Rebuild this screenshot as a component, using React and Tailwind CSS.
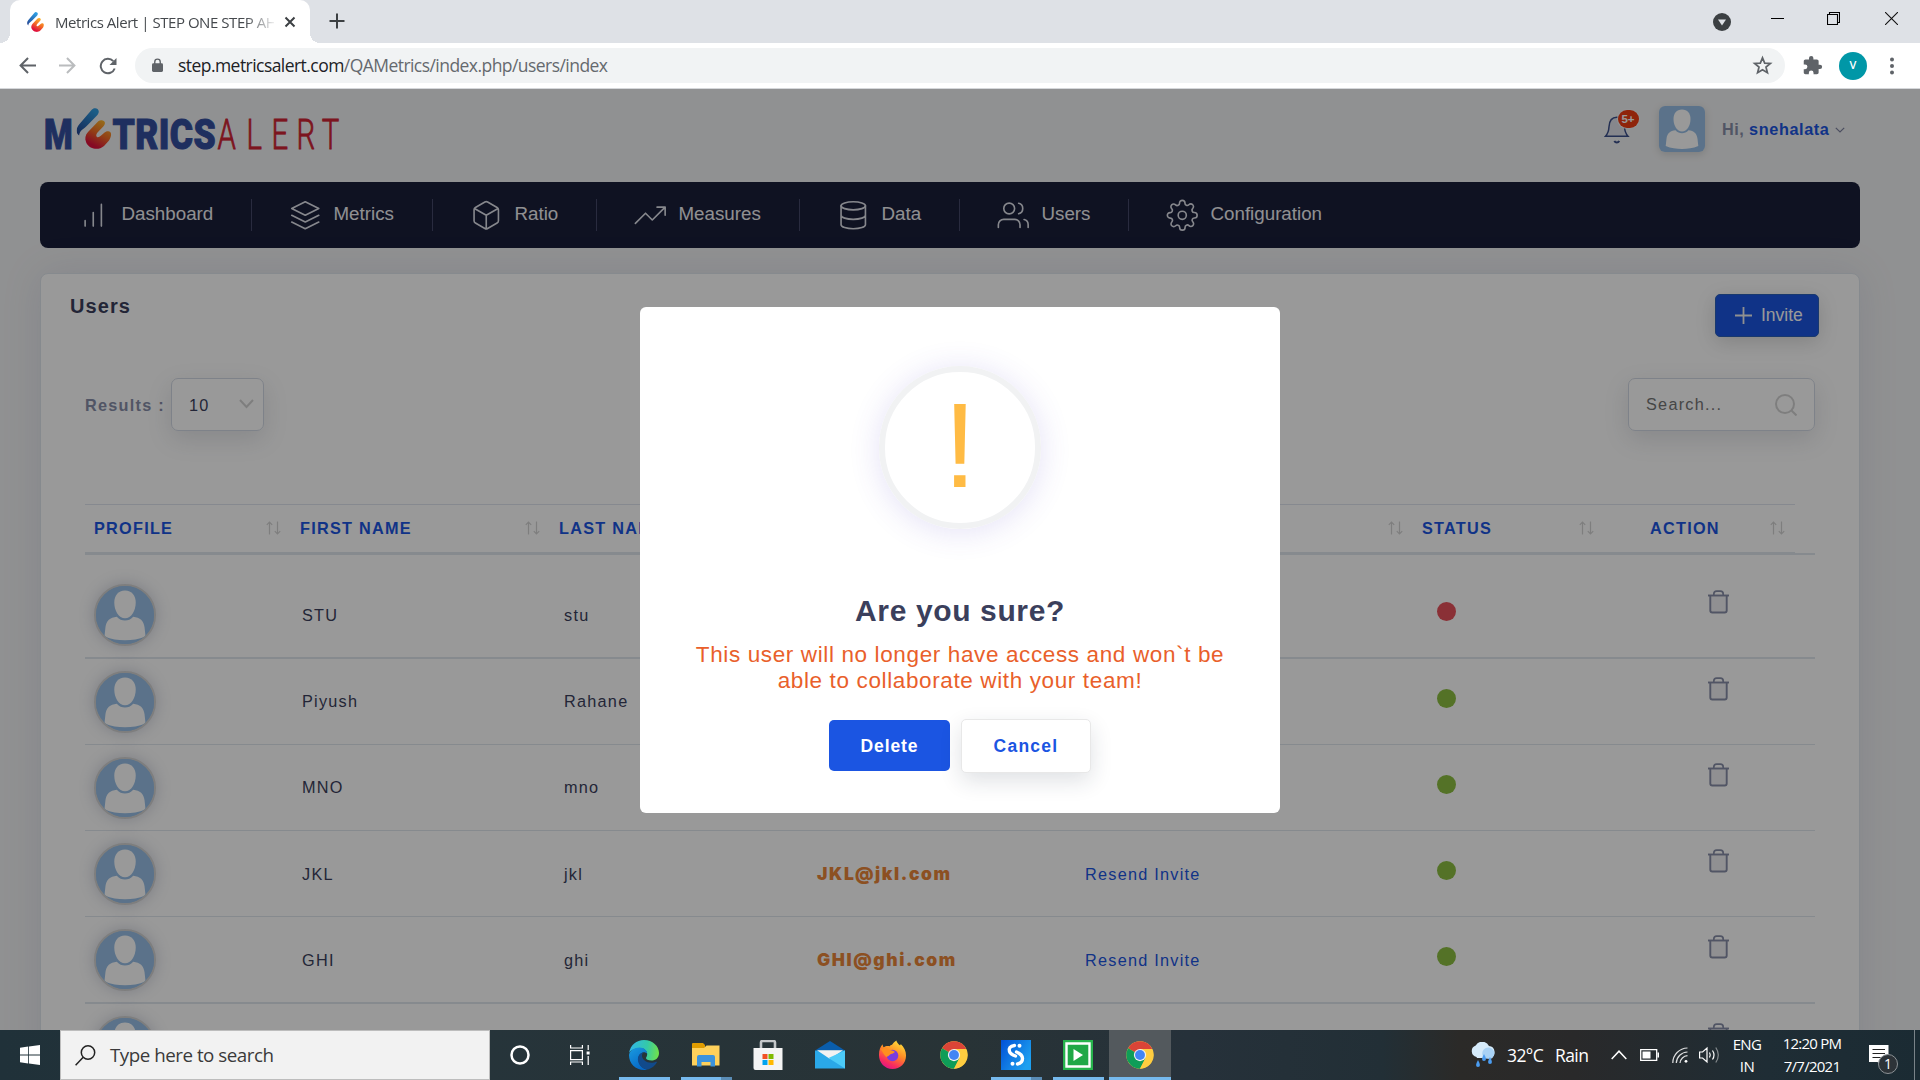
import React from "react";

function Feather({ children, size = 33.75, sw = 1.3, className = "" }) {
  return (
    <svg width={size} height={size} viewBox="0 0 24 24" fill="none" stroke="currentColor" strokeWidth={sw} strokeLinecap="round" strokeLinejoin="round" className={"shrink-0 " + className}>
      {children}
    </svg>
  );
}

function Flame({ id, ...rest }) {
  return (
    <svg viewBox="0 0 35 41" {...rest}>
      <defs>
        <linearGradient id={id + "b"} x1="0" y1="1" x2="0.6" y2="0">
          <stop offset="0" stopColor="#23408e" />
          <stop offset="1" stopColor="#2f9be0" />
        </linearGradient>
        <linearGradient id={id + "r"} x1="0.3" y1="1" x2="0.8" y2="0">
          <stop offset="0.1" stopColor="#e0113c" />
          <stop offset="0.5" stopColor="#f36a25" />
          <stop offset="1" stopColor="#fbc02d" />
        </linearGradient>
      </defs>
      <path d="M15 2C16.200.5 17.500.1 19 .3C21.500.6 23 3 22 5C21.500 6.300 20.500 7.600 19.500 8.600L10.200 18C7.500 20.500 5.500 21.500 4.200 23.300C3.200 24.700 2.900 26 2.600 27.500C1 26.500 .2 25 .2 22.800C.2 20.300 1.200 18.200 2.800 16.300Z" fill={`url(#${id}b)`} />
      <path d="M21.800 13.300C23 12.200 24.200 12 25.400 12.200C27.500 12.500 29 14.300 28.300 16C27.800 17.400 26.800 18.500 25.800 19.600L21 24.600C19.300 26.500 19.500 28.500 20.500 29.100C21.800 29.600 23 29 24.300 27.800L27.500 24.900C29 23.600 30.500 22.900 32 23.200C34.300 23.700 34.900 25.500 34.500 27.500C34 29.800 33.500 31 32.300 32.700L27.500 38C24.500 40.500 21.500 41 18.500 40.700C14.500 40.200 11 37.800 9.700 34.500C8 30.500 8.800 27 11.500 24Z" fill={`url(#${id}r)`} />
    </svg>
  );
}

function BrowserChrome() {
  return (
    <div className="shrink-0 h-[89px] bg-white border-b border-[#d5d7da] font-['Open_Sans',sans-serif]">
      <div className="h-[43px] bg-[#dee1e6] flex items-start">
        <div className="w-[10px] h-full flex items-end"><div className="w-[10px] h-[10px] bg-[radial-gradient(circle_at_0_0,#dee1e6_10px,#fff_10px)]" /></div>
        <div className="w-[300px] h-full bg-white rounded-t-[10px] flex items-center pl-[17px]">
          <Flame id="fav" className="w-[17px] h-[20px]" preserveAspectRatio="none" />
          <div className="ml-[11px] w-[219px] h-[24px] leading-[24px] text-[15px] tracking-[-0.450px] text-[#45494d] whitespace-nowrap overflow-hidden [mask-image:linear-gradient(to_right,#000_190px,transparent_222px)]">Metrics Alert | STEP ONE STEP AHEAD</div>
          <svg width="12" height="12" viewBox="0 0 12 12" className="ml-[10px]" stroke="#3c4043" strokeWidth="2"><path d="M1.500 1.500l9 9M10.500 1.500l-9 9" /></svg>
        </div>
        <div className="w-[10px] h-full flex items-end"><div className="w-[10px] h-[10px] bg-[radial-gradient(circle_at_100%_0,#dee1e6_10px,#fff_10px)]" /></div>
        <svg width="16" height="16" viewBox="0 0 16 16" className="ml-[9px] mt-[13px]" stroke="#3c4043" strokeWidth="2"><path d="M8 .5v15M.5 8h15" /></svg>
        <div className="flex-1" />
        <svg width="18" height="18" viewBox="0 0 18 18" className="mt-[13px]"><circle cx="9" cy="9" r="9" fill="#3c4043" /><path d="M5 6.500h8L9 12.500z" fill="#dee1e6" /></svg>
        <svg width="13" height="13" viewBox="0 0 13 13" className="ml-[40px] mt-[12px]"><path d="M0 6.500h13" stroke="#000" /></svg>
        <svg width="13" height="13" viewBox="0 0 13 13" className="ml-[43px] mt-[12px]" fill="none" stroke="#000" strokeWidth="1.100"><path d="M.5 2.500h10v10H.5zM2.500 2.500V.5h10v10h-2" /></svg>
        <svg width="13" height="13" viewBox="0 0 13 13" className="ml-[45px] mr-[22px] mt-[12px]" stroke="#111" strokeWidth="1.100"><path d="M0 0l13 13M13 0L0 13" /></svg>
      </div>
      <div className="h-[45px] flex items-center">
        <svg width="17" height="17" viewBox="0 0 16 16" className="ml-[19px]" fill="none" stroke="#5f6368" strokeWidth="1.900"><path d="M16 8H1.800M8.500 1L1.500 8l7 7" /></svg>
        <svg width="17" height="17" viewBox="0 0 16 16" className="ml-[23px]" fill="none" stroke="#babcbe" strokeWidth="1.900"><path d="M0 8h14.200M7.500 1l7 7-7 7" /></svg>
        <svg width="18" height="18" viewBox="0 0 18 18" className="ml-[23px]" fill="none" stroke="#5f6368" strokeWidth="2"><path d="M15.700 11.500A7.200 7.200 0 1 1 14.300 4.200" /><path d="M17.500 1v7h-7z" fill="#5f6368" stroke="none" /></svg>
        <div className="ml-[18px] w-[1650px] h-[35px] rounded-full bg-[#f1f3f4] flex items-center">
          <svg width="11" height="15" viewBox="0 0 12 15" className="ml-[17px]" fill="#5f6368"><rect x="0" y="5" width="12" height="9.500" rx="1.500" /><path d="M3 6V3.600a3 3 0 0 1 6 0V6" fill="none" stroke="#5f6368" strokeWidth="1.500" /></svg>
          <div className="ml-[15px] text-[17.500px] leading-[28px] pb-[1px] tracking-[-0.550px] text-[#65696e] whitespace-nowrap"><span className="text-[#202124]">step.metricsalert.com</span>/QAMetrics/index.php/users/index</div>
          <div className="flex-1" />
          <svg width="21" height="21" viewBox="0 0 24 24" className="mr-[12px]" fill="none" stroke="#5f6368" strokeWidth="2"><path d="M12 3.200l2.500 6 6.500.5-5 4.200 1.600 6.300L12 16.800 6.400 20.200 8 13.900 3 9.700l6.500-.5z" /></svg>
        </div>
        <svg width="21" height="21" viewBox="0 0 24 24" className="ml-[17px]" fill="#5f6368"><path d="M20.500 11H19V7c0-1.100-.9-2-2-2h-4V3.500a2.500 2.500 0 0 0-5 0V5H4c-1.100 0-2 .9-2 2v3.800h1.500a2.700 2.700 0 0 1 0 5.400H2V20c0 1.100.9 2 2 2h3.800v-1.500a2.700 2.700 0 0 1 5.400 0V22H17c1.100 0 2-.9 2-2v-4h1.500a2.500 2.500 0 0 0 0-5z" /></svg>
        <div className="ml-[16px] w-[28px] h-[28px] rounded-full bg-[#0097a7] text-white text-[11px] font-semibold flex items-center justify-center">V</div>
        <svg width="4" height="18" viewBox="0 0 4 18" className="ml-[23px]" fill="#5f6368"><circle cx="2" cy="2.500" r="2" /><circle cx="2" cy="9" r="2" /><circle cx="2" cy="15.500" r="2" /></svg>
      </div>
    </div>
  );
}

function Logo() {
  return (
    <svg width="300" height="46" viewBox="0 0 300 46" className="mt-[17px]">
      <g fontFamily="Roboto, sans-serif" fontSize="42">
        <text x="0" y="43" fontWeight="900" fill="#344f9f" stroke="#344f9f" strokeWidth="1" textLength="29" lengthAdjust="spacingAndGlyphs">M</text>
        <text x="68.500" y="43" fontWeight="900" fill="#344f9f" stroke="#344f9f" strokeWidth="1" textLength="103.500" lengthAdjust="spacingAndGlyphs">TRICS</text>
        <g transform="translate(173.500 43) scale(.7 1)">
          <text x="0 41.500 77 113 149" y="0" fontWeight="300" fill="#cf2434" stroke="#cf2434" strokeWidth=".8">ALERT</text>
        </g>
      </g>
      <g transform="translate(32.500 2)"><Flame id="lg" width="35" height="41" preserveAspectRatio="none" /></g>
    </svg>
  );
}

function Person({ className }) {
  return (
    <svg viewBox="0 0 46 46" className={className}>
      <rect width="46" height="46" fill="#98bfe6" />
      <path d="M23 3.500c5.500 0 8.500 4 8.500 9.500C31.500 19.500 28 25.500 23 25.500S14.500 19.500 14.500 13C14.500 7.500 17.500 3.500 23 3.500z" fill="#fff" />
      <path d="M16.500 24.300c2 2.300 4 3 6.500 3s4.500-.7 6.500-3c5.500.7 8.300 3 9 8.500l.8 7.200C34 42.300 28.500 43 23 43s-11-.7-16.300-3l.8-7.200c.7-5.500 3.500-7.800 9-8.500z" fill="#fff" />
    </svg>
  );
}

function Header() {
  return (
    <div className="h-[93px] flex items-start pl-[44px] pr-[75px] text-[16.250px] tracking-[0.450px] font-bold">
      <Logo />
      <div className="flex-1" />
      <div className="relative w-[26px] mt-[27px] mr-[29px]">
        <svg width="26" height="29" viewBox="0 0 26 29" fill="none" stroke="#3b4f8a" strokeWidth="1.500" className="block">
          <path d="M1.500 20.200h22.500c-2.800-3-3.300-6-3.500-9.500-.3-5.500-2.800-9.500-7.700-9.500s-7.500 4-7.800 9.500c-.2 3.500-.7 6.500-3.500 9.500z" fill="rgba(120,135,180,.15)" />
          <path d="M10.300 25c1.300 2 3.700 2 5 0" strokeWidth="2" />
        </svg>
        <div className="absolute left-[13px] top-[-7px] w-[23px] h-[20px] rounded-full bg-[#f5f6fa] p-[1px]">
          <div className="w-full h-full rounded-full bg-[#ef3d13] text-white text-[11.500px] tracking-[0] leading-[18px] text-center pr-[1px]">5+</div>
        </div>
      </div>
      <Person className="w-[46px] h-[46px] mt-[17px] rounded-[6px] shadow-[0_2px_8px_rgba(0,0,0,.15)]" />
      <div className="ml-[17px] w-[108px] whitespace-nowrap mt-[29px] leading-[22px] text-[#888ea8]">Hi, <span className="text-[#1b55e2] tracking-[0.600px]">snehalata</span></div>
      <svg width="10" height="6" viewBox="0 0 10 6" className="mt-[38px] ml-[5px]" fill="none" stroke="#7d82a0" strokeWidth="1.200"><path d="M.8.8L5 5 9.200.8" /></svg>
    </div>
  );
}

const nav = [
  ["Dashboard", "w-[212px]", <path d="M12 20V10M18 20V4M6 20V16" />],
  ["Metrics", "w-[181px]", <path d="M12 2L2 7l10 5 10-5-10-5zM2 17l10 5 10-5M2 12l10 5 10-5" />],
  ["Ratio", "w-[164px]", <path d="M21 16V8a2 2 0 0 0-1-1.730l-7-4a2 2 0 0 0-2 0l-7 4A2 2 0 0 0 3 8v8a2 2 0 0 0 1 1.730l7 4a2 2 0 0 0 2 0l7-4A2 2 0 0 0 21 16zM3.270 6.960L12 12.010l8.730-5.050M12 22.080V12" />],
  ["Measures", "w-[203px]", <path d="M23 6l-9.500 9.500-5-5L1 18M17 6h6v6" />],
  ["Data", "w-[160px]", <><ellipse cx="12" cy="5" rx="9" ry="3" /><path d="M21 12c0 1.660-4 3-9 3s-9-1.340-9-3M3 5v14c0 1.660 4 3 9 3s9-1.340 9-3V5" /></>],
  ["Users", "w-[169px]", <><path d="M17 21v-2a4 4 0 0 0-4-4H5a4 4 0 0 0-4 4v2M23 21v-2a4 4 0 0 0-3-3.870M16 3.130a4 4 0 0 1 0 7.750" /><circle cx="9" cy="7" r="4" /></>],
  ["Configuration", "w-[240px]", <><circle cx="12" cy="12" r="3" /><path d="M19.400 15a1.650 1.650 0 0 0 .33 1.820l.06.06a2 2 0 0 1 0 2.830 2 2 0 0 1-2.830 0l-.06-.06a1.650 1.650 0 0 0-1.820-.33 1.650 1.650 0 0 0-1 1.510V21a2 2 0 0 1-2 2 2 2 0 0 1-2-2v-.09A1.650 1.650 0 0 0 9 19.400a1.650 1.650 0 0 0-1.820.33l-.06.06a2 2 0 0 1-2.830 0 2 2 0 0 1 0-2.830l.06-.06a1.650 1.650 0 0 0 .33-1.820 1.650 1.650 0 0 0-1.510-1H3a2 2 0 0 1-2-2 2 2 0 0 1 2-2h.09A1.650 1.650 0 0 0 4.600 9a1.650 1.650 0 0 0-.33-1.820l-.06-.06a2 2 0 0 1 0-2.830 2 2 0 0 1 2.830 0l.06.06a1.650 1.650 0 0 0 1.820.33H9a1.650 1.650 0 0 0 1-1.510V3a2 2 0 0 1 2-2 2 2 0 0 1 2 2v.09a1.650 1.650 0 0 0 1 1.510 1.650 1.650 0 0 0 1.820-.33l.06-.06a2 2 0 0 1 2.830 0 2 2 0 0 1 0 2.830l-.06.06a1.650 1.650 0 0 0-.33 1.820V9a1.650 1.650 0 0 0 1.510 1H21a2 2 0 0 1 2 2 2 2 0 0 1-2 2h-.09a1.650 1.650 0 0 0-1.510 1z" /></>],
];

function NavBar() {
  return (
    <div className="ml-[40px] w-[1820px] h-[66px] bg-[#191e3a] rounded-[8px] flex items-center text-[#f0f0f3] text-[18.750px]">
      {nav.map(([label, w, icon], i) => (
        <div key={label} className={`${w} h-[32px] flex items-center pl-[37px] ${i < 6 ? "border-r border-[#45496a]" : ""}`}>
          <Feather size={32.5} sw={1.2} className="text-[#e0e2ea]">{icon}</Feather>
          <span className="ml-[12px] leading-[24px] relative top-[-1px]">{label}</span>
        </div>
      ))}
    </div>
  );
}

function Sort() {
  return (
    <svg width="15" height="14" viewBox="0 0 15 14" fill="none" stroke="#d3d3d3" strokeWidth="1.200" className="mr-[10px] mt-[-1px]">
      <path d="M3.500 13.500V1M.8 3.800L3.500 1l2.700 2.800M11.500.5V13M8.800 10.200l2.700 2.800 2.700-2.800" />
    </svg>
  );
}

const heads = [
  ["PROFILE", "w-[206px] pl-[9px]"],
  ["FIRST NAME", "w-[259px] pl-[9px]"],
  ["LAST NAME", "w-[258px] pl-[9px]"],
  ["", "w-[264px] pl-[9px]"],
  ["", "w-[341px] pl-[9px]"],
  ["STATUS", "w-[191px] pl-[9px]"],
  ["ACTION", "w-[191px] pl-[46px]"],
];

const rows = [
  { first: "STU", last: "stu", red: true, drop: true },
  { first: "Piyush", last: "Rahane" },
  { first: "MNO", last: "mno" },
  { first: "JKL", last: "jkl", mail: "JKL@jkl.com", drop: true },
  { first: "GHI", last: "ghi", mail: "GHI@ghi.com", drop: true },
  { first: "", last: "" },
];
const rowStyles = [
  "h-[104px] pt-[17px] border-b-2",
  "h-[86px] border-b",
  "h-[86px] border-b",
  "h-[86px] border-b",
  "h-[87px] border-b-2",
  "h-[86px]",
];

function UsersTable() {
  return (
    <div className="mt-[73px] mx-[44px] text-[16.250px] tracking-[1.250px]">
      <div className="w-[1710px] h-[48px] flex items-center border-t border-[#dfe4ee] font-bold text-[#1b55e2]">
        {heads.map(([h, c], i) => (
          <div key={i} className={`${c} flex items-center justify-between whitespace-nowrap`}><span>{h}</span><Sort /></div>
        ))}
      </div>
      <div className="w-[1710px] h-px bg-[#e0e6ed]" />
      <div className="border-t-2 border-[#e0e6ed]">
        {rows.map((r, i) => {
          const drop = r.drop ? "pt-[2px]" : "";
          return (
            <div key={i} className={`${rowStyles[i]} border-[#e0e6ed] flex items-center text-[#3b3f5c]`}>
              <div className="w-[217px] pl-[9px]">
                <div className="w-[62px] h-[62px] rounded-full border-2 border-[#d2d2d2] bg-[#98bfe6] shadow-[0_0_15px_rgba(60,70,110,.25)] overflow-hidden">
                  <Person className="w-[58px] h-[58px]" />
                </div>
              </div>
              <div className={`w-[262px] ${drop}`}>{r.first}</div>
              <div className={`w-[253px] ${drop}`}>{r.last}</div>
              <div className={`w-[268px] ${drop} whitespace-nowrap font-['Inter',sans-serif] font-black text-[17.500px] tracking-[1.600px] text-[#ea8639]`}>{r.mail}</div>
              <div className={`w-[352px] ${drop} text-[#1b55e2]`}>{r.mail && "Resend Invite"}</div>
              <div className={`w-[19px] h-[19px] rounded-full mt-[-6px] mr-[252px] ${r.red ? "bg-[#e7515a]" : "bg-[#8dbf42]"}`} />
              <svg width="21" height="24" viewBox="0 0 21 24" fill="none" stroke="#888ea8" strokeWidth="1.900" className="mt-[-25px]">
                <path d="M0 5.500h21" /><path d="M5.800 5.500V4q0-2.800 2.800-2.800h3.800q2.800 0 2.800 2.800v1.500" strokeWidth="1.700" /><path d="M2.300 6v14.500q0 2 2 2h12.400q2 0 2-2V6" fill="rgba(136,142,168,.12)" />
              </svg>
            </div>
          );
        })}
      </div>
    </div>
  );
}

function UsersCard() {
  return (
    <div className="mt-[25px] ml-[40px] w-[1820px] h-[900px] bg-white rounded-[8px] border border-[#e0e6ed] shadow-[0_0_40px_rgba(94,92,154,.12)]">
      <div className="h-[103px] flex justify-between items-start pl-[29px] pr-[40px]">
        <div className="mt-[20px] text-[20px] leading-[24px] tracking-[1.100px] font-bold text-[#3b3f5c]">Users</div>
        <div className="mt-[20px] w-[104px] h-[43px] rounded-[5px] bg-[#1b55e2] border border-[#2a5fb8] text-white text-[17.500px] flex items-center pl-[19px] shadow-[0_5px_20px_rgba(0,0,0,.15)]">
          <svg width="17" height="17" viewBox="0 0 17 17" stroke="#f1f1f1" strokeWidth="1.800"><path d="M8.500 0v17M0 8.500h17" /></svg>
          <span className="ml-[9px]">Invite</span>
        </div>
      </div>
      <div className="h-[54px] flex items-center pl-[44px] pr-[44px]">
        <div className="w-[86px] pt-[2px] text-[16.250px] tracking-[1.250px] font-bold text-[#888ea8] whitespace-nowrap">Results :</div>
        <div className="w-[93px] h-[53px] rounded-[7px] border border-[#d3d9e4] shadow-[0_8px_25px_rgba(60,70,90,.15)] flex items-center justify-between pl-[17px] pr-[9px] text-[16.250px] tracking-[1.250px] text-[#3b3f5c]">
          <span className="mt-[2px]">10</span>
          <svg width="15" height="10" viewBox="0 0 15 10" fill="none" stroke="#d3d3d3" strokeWidth="2"><path d="M1 1l6.500 7L14 1" /></svg>
        </div>
        <div className="flex-1" />
        <div className="w-[187px] h-[53px] rounded-[7px] border border-[#d3d9e4] shadow-[0_8px_25px_rgba(60,70,90,.15)] flex items-center justify-between pl-[17px] pr-[17px] text-[16.250px] tracking-[1.250px] text-[#757575]">
          <span>Search...</span>
          <svg width="22" height="22" viewBox="0 0 22 22" fill="none" stroke="#d3d3d3" strokeWidth="2" className="mt-[2px]"><circle cx="10" cy="10" r="9" /><path d="M16.500 16.500l5 5" /></svg>
        </div>
      </div>
      <UsersTable />
    </div>
  );
}

function ConfirmModal() {
  return (
    <div className="absolute inset-0 bg-black/40 flex justify-center items-start pt-[218px]">
      <div className="w-[640px] h-[506px] bg-white rounded-[6px] flex flex-col items-center">
        <div className="mt-[59px] w-[162px] h-[163px] shrink-0 rounded-full border-[6px] border-[#f1f2f3] shadow-[0_3px_31px_rgba(90,70,200,.16)] flex items-center justify-center text-[#ffbb44] text-[120px] leading-[150px]"><span className="relative top-[-3px]">!</span></div>
        <div className="mt-[58px] text-[30px] leading-[48px] tracking-[0.625px] font-bold text-[#3b3f5c]">Are you sure?</div>
        <div className="mt-[7px] text-center text-[22.500px] leading-[26.250px] tracking-[0.625px] text-[#e95f2b]">This user will no longer have access and won`t be<br />able to collaborate with your team!</div>
        <div className="mt-[24px] flex items-center gap-[11px] font-bold text-[17.500px] tracking-[1.250px]">
          <div className="w-[121px] h-[51px] rounded-[5px] bg-[#1b55e2] text-white tracking-[0.900px] flex items-center justify-center pt-[1px]">Delete</div>
          <div className="w-[130px] h-[54px] rounded-[5px] bg-white border border-[#e8e8e8] text-[#1b55e2] flex items-center justify-center pt-[1px] shadow-[0_8px_22px_rgba(31,45,61,.14)]">Cancel</div>
        </div>
      </div>
    </div>
  );
}

function ChromeIcon() {
  return (
    <svg width="28" height="28" viewBox="0 0 48 48">
      <circle cx="24" cy="24" r="23.500" fill="#ffcd40" />
      <path d="M24 24L3.600 12.300A23.500 23.500 0 0 1 44.400 12.300L44.400 13.500H24z" fill="#db4437" />
      <path d="M3.600 12.300A23.500 23.500 0 0 0 24 47.500L34 30 24 24z" fill="#0f9d58" />
      <path d="M24 13.500h20.400A23.500 23.500 0 0 1 24 47.500l9.100-18.200z" fill="#ffcd40" />
      <circle cx="24" cy="24" r="10.500" fill="#f1f1f1" /><circle cx="24" cy="24" r="8.500" fill="#4285f4" />
    </svg>
  );
}

const EdgeIcon = () => (
  <svg width="30" height="30" viewBox="0 0 30 30">
    <defs>
      <linearGradient id="eg" x1="0" y1=".3" x2="1" y2=".4"><stop offset="0" stopColor="#31b5ea" /><stop offset=".6" stopColor="#34c9a8" /><stop offset="1" stopColor="#6fe04c" /></linearGradient>
      <linearGradient id="eb" x1="0" y1="0" x2=".6" y2="1"><stop offset="0" stopColor="#1a9be0" /><stop offset="1" stopColor="#0667c5" /></linearGradient>
    </defs>
    <path d="M0 13C1.500 5 7.500 0 15 0c8.500 0 15 6 15 13 0 5-3.500 7.500-7.500 7.500-3.500 0-5.500-1.200-5.500-2.500 0-.8 1.200-1.500 1.200-4C18 11 15.500 8 11 8 6 8 1.500 10.500 0 13z" fill="url(#eg)" />
    <path d="M0 15C.5 10.500 5.500 7.500 10.500 7.500c4.500 0 7.700 3 7.700 6.200-1-1.200-2.500-1.700-3.700-1.500C10.500 13 9 17 9.500 20.500c.6 4.500 4 8.500 9 9-1.200.4-2.300.5-3.500.5C6.500 30 0 23.500 0 15z" fill="url(#eb)" />
    <path d="M14.500 12.200C10 13 8.500 17 9 20.500c.6 4.500 4.500 9 10 9 4-1.200 7-3.700 8.800-7 .3-.6-.2-1-.8-.7-1.500.8-3 1-4.500 1-5.500 0-9.500-3.500-9.500-7 0-1.500.6-2.800 1.500-3.600z" fill="#114a8b" />
  </svg>
);
const FolderIcon = () => (
  <svg width="28" height="24" viewBox="0 0 28 24"><path d="M0 1q0-1 1-1h10l2 2v5H0z" fill="#e09c00" /><path d="M0 5h12l2.500-2.500H27.500V22.500H0z" fill="#ffd15b" /><path d="M5 23V14q0-2 2-2h14q2 0 2 2v9.500h-4.500V19h-9v4.500H5z" fill="#3c93dc" /></svg>
);
const StoreIcon = () => (
  <svg width="30" height="30" viewBox="0 0 30 30"><path d="M8 9V2.500Q8 1 9.500 1h11Q22 1 22 2.500V9" fill="none" stroke="#c4c7c9" strokeWidth="2.600" /><path d="M.5 8h29v22H2.500q-2 0-2-2z" fill="#f4f4f4" /><path d="M9.500 14h5v5h-5z" fill="#f25022" /><path d="M15.500 14h5v5h-5z" fill="#7fba00" /><path d="M9.500 20h5v5h-5z" fill="#00a4ef" /><path d="M15.500 20h5v5h-5z" fill="#ffb900" /></svg>
);
const MailIcon = () => (
  <svg width="30" height="28" viewBox="0 0 30 28"><path d="M0 9.500L15 0l15 9.500z" fill="#0a5dab" /><path d="M0 9.500h30v18H0z" fill="#2aa8e8" /><path d="M2 9.300h26L15 18z" fill="#f2f2f2" /><path d="M30 9.500L13.500 17 30 27.500z" fill="#4ccbf8" /></svg>
);
const FirefoxIcon = () => (
  <svg width="29" height="30" viewBox="0 0 30 30">
    <defs><linearGradient id="ff" x1=".8" y1="0" x2=".3" y2="1"><stop offset="0" stopColor="#ffe53c" /><stop offset=".45" stopColor="#ff8a25" /><stop offset=".8" stopColor="#f92d5e" /><stop offset="1" stopColor="#e01488" /></linearGradient></defs>
    <path d="M1 15C1 10 2.500 6 5 4c-.2 1.500.2 2.500 1 3 1.500-1.200 4-1.500 6-1 .5-.8 1.500-1.300 2.500-1.500C15.500 3 17 1 19 0c.3 2 2 3.500 3.500 5 .8-.3 1-1 1-1.500C27 6.500 29 11 29 15.500 29 23.500 23 29.500 15 29.500S1 23 1 15z" fill="url(#ff)" />
    <circle cx="15" cy="15.500" r="6" fill="#7a3be0" />
    <path d="M3 9c3-1.500 6-1 8 .2 2 1 5 .8 6.500 2.800-1.500 2-4 1.500-5.500 3-1 1-2.500 2-3.500 2C6 15 5 12 3 9z" fill="#ff8f1f" />
  </svg>
);
const SIcon = () => (
  <svg width="30" height="30" viewBox="0 0 30 30"><defs><linearGradient id="sb" x1="0" y1="0" x2="1" y2=".6"><stop offset="0" stopColor="#0250d6" /><stop offset="1" stopColor="#1da0f0" /></linearGradient></defs><path d="M0 0h30v30H0z" fill="url(#sb)" /><g fill="none" stroke="#fff" strokeWidth="3.400" strokeLinecap="round"><path d="M13.500 5.500C9 6 7.500 8.500 8.500 11.500c.7 2 3 3.500 6 4.500" /><path d="M15.500 12c4 1.500 6 3.500 6 6.500s-2 5-5 5.500" /></g><circle cx="18.500" cy="5.800" r="2" fill="#fff" /><circle cx="11.500" cy="23.800" r="2" fill="#fff" /></svg>
);
const PlayIcon = () => (
  <svg width="30" height="30" viewBox="0 0 30 30"><path d="M0 0h30v30H0z" fill="#27b34c" /><path d="M3.500 3.500h23v23h-23z" fill="#20a847" stroke="#fff" strokeWidth="2.400" /><path d="M10.500 9l9.500 6-9.500 6z" fill="#fff" /></svg>
);

const apps = [
  [<EdgeIcon />, "on"], [<FolderIcon />, "multi"], [<StoreIcon />, ""], [<MailIcon />, ""], [<FirefoxIcon />, ""],
  [<ChromeIcon />, ""], [<SIcon />, "multi"], [<PlayIcon />, "on"], [<ChromeIcon />, "active"],
];

function Taskbar() {
  return (
    <div className="shrink-0 h-[50px] bg-[linear-gradient(to_right,#203139,#26343a_25%,#283336_50%,#26313a_62%,#222f36_72%,#2b2a28_76%,#29292a_82%,#1f2d35_92%,#1b2b33)] flex text-white font-['Open_Sans',sans-serif]">
      <div className="w-[60px] flex items-center justify-center">
        <svg width="20" height="20" viewBox="0 0 20 20" fill="#fff"><path d="M0 2.800l8.200-1.200v8H0zM9 1.500L20 0v9.600H9zM0 10.400h8.200v8L0 17.200zM9 10.400h11V20L9 18.500z" /></svg>
      </div>
      <div className="w-[430px] h-[50px] bg-[#f2f2f2] border border-[#bdbdbd] flex items-center pl-[14px]">
        <svg width="21" height="21" viewBox="0 0 21 21" fill="none" stroke="#222" strokeWidth="1.500"><circle cx="13" cy="7.500" r="6.700" /><path d="M8.200 12.300L.6 20.300" /></svg>
        <span className="ml-[14px] text-[18.750px] tracking-[-0.480px] text-[#3a3a3a]">Type here to search</span>
      </div>
      <div className="w-[60px] flex items-center justify-center">
        <svg width="20" height="20" viewBox="0 0 20 20"><circle cx="10" cy="10" r="8.500" fill="none" stroke="#fff" strokeWidth="2.500" /></svg>
      </div>
      <div className="w-[63px] flex items-center pl-[20px]">
        <svg width="20" height="20" viewBox="0 0 20 20" fill="none" stroke="#fff" strokeWidth="1.200"><path d="M.6 5.600h11.800v9H.6zM.6 0v3h11.800V0M.6 20v-3h11.800v3M18.200 0v5M18.200 11v9" /><path d="M16.600 6.500h3v3h-3z" fill="#fff" stroke="none" /></svg>
      </div>
      {apps.map(([icon, state], i) => (
        <div key={i} className={`w-[62px] h-full flex flex-col items-center ${state === "active" ? "bg-[#53595d]" : ""}`}>
          <div className="h-[47px] pt-[3px] flex items-center justify-center">{icon}</div>
          {state === "on" && <div className="w-[51px] h-[3px] bg-[#76b9ed]" />}
          {state === "multi" && <div className="w-[51px] h-[3px] flex"><div className="w-[40px] bg-[#76b9ed]" /><div className="w-[11px] bg-[#5a8cb5]" /></div>}
          {state === "active" && <div className="w-[62px] h-[3px] bg-[#76b9ed]" />}
        </div>
      ))}
      <div className="flex-1" />
      <div className="flex items-center">
        <svg width="27" height="26" viewBox="0 0 27 26"><path d="M6.500 15a6 6 0 0 1-.8-11.500A7.500 7.500 0 0 1 19 4a6.200 6.200 0 0 1 1.500 12H7z" fill="#d6ebfa" /><path d="M15 16.500a6 6 0 1 1 5.500.5z" fill="#a9d2f5" /><path d="M8 18q-4 7 0 7t0-7zM14 12q-4 7 0 7t0-7zM20 15q-4 7 0 7t0-7z" fill="#4b9cf0" /></svg>
        <span className="ml-[10px] w-[37px] whitespace-nowrap text-[17.500px] tracking-[-0.600px]">32°C</span>
        <span className="ml-[11px] w-[34px] whitespace-nowrap text-[17.500px] tracking-[-0.600px]">Rain</span>
        <svg width="16" height="10" viewBox="0 0 16 10" className="ml-[22px]" fill="none" stroke="#fff" strokeWidth="1.500"><path d="M.7 9L8 1.200 15.300 9" /></svg>
        <svg width="19" height="12" viewBox="0 0 19 12" className="ml-[13px]"><path d="M.7.7h16v10.600h-16z" fill="none" stroke="#fff" strokeWidth="1.300" /><path d="M2.500 2.500h8v7h-8zM17.500 3.500H19v5h-1.500z" fill="#fff" /></svg>
        <svg width="16" height="16" viewBox="0 0 16 16" className="ml-[13px]" fill="none" stroke="#fff" strokeWidth="1.200"><path d="M.8 16A15 15 0 0 1 15.500 1M4.300 16A11.500 11.500 0 0 1 15.500 5M8 16A8 8 0 0 1 15.500 8.700" opacity=".85" /><circle cx="14" cy="14.300" r="1.400" fill="#fff" stroke="none" /></svg>
        <svg width="21" height="18" viewBox="0 0 21 18" className="ml-[11px]" fill="none" stroke="#fff" strokeWidth="1.200"><path d="M.6 6h3L8 2v14l-4.400-4h-3zM10.500 6.500q1.500 2.500 0 5M13.500 4.500q3 4.500 0 9" /><path d="M16.800 1.500q5 7.500 0 15" opacity=".45" /></svg>
      </div>
      <div className="ml-[2px] w-[50px] flex flex-col items-center pt-[3px] text-[15px] leading-[22px] tracking-[-0.600px]"><span>ENG</span><span>IN</span></div>
      <div className="ml-[2px] w-[76px] flex flex-col items-center pt-[2px] text-[15px] leading-[22.500px] tracking-[-0.750px] whitespace-nowrap"><span>12:20 PM</span><span>7/7/2021</span></div>
      <div className="relative ml-[19px] w-[45px] mt-[15px]">
        <svg width="20" height="22" viewBox="0 0 20 22"><path d="M0 0h19.500v17H13v4.500L8.500 17H0z" fill="#fff" /><path d="M3.500 4.500h12.500M3.500 8.500h12.500M3.500 12.500h8" stroke="#222" strokeWidth="1.200" /></svg>
        <div className="absolute left-[9px] top-[9px] w-[20px] h-[20px] rounded-full bg-[#2d3338] border border-[#8c9296] text-[14px] leading-[18px] text-center">1</div>
      </div>
      <div className="w-[6px] border-l border-[#7a8388]" />
    </div>
  );
}

export default function App() {
  return (
    <div className="w-[1920px] h-[1080px] flex flex-col overflow-hidden">
      <BrowserChrome />
      <div className="relative flex-1 overflow-hidden bg-[#f1f2f3] font-['Liberation_Sans',Arial,sans-serif]">
        <Header />
        <NavBar />
        <UsersCard />
        <ConfirmModal />
      </div>
      <Taskbar />
    </div>
  );
}
